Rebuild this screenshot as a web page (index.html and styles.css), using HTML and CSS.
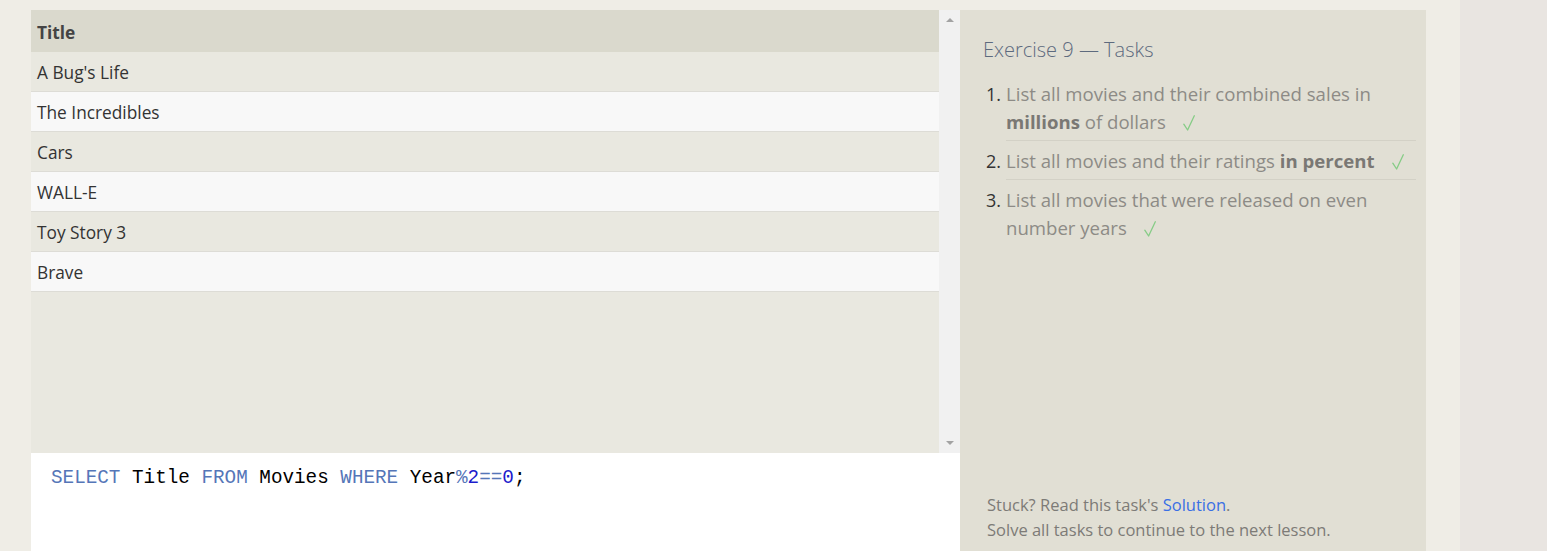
FILE: index.html
```html
<!DOCTYPE html>
<html>
<head>
<meta charset="utf-8">
<link rel="stylesheet" href="styles.css">
</head>
<body>
<div class="page">
  <div class="app">
    <div class="left">
      <div class="results">
        <div class="table">
          <div class="row head">Title</div>
          <div class="row odd">A Bug's Life</div>
          <div class="row even">The Incredibles</div>
          <div class="row odd">Cars</div>
          <div class="row even">WALL-E</div>
          <div class="row odd">Toy Story 3</div>
          <div class="row even">Brave</div>
        </div>
        <div class="scrollbar">
          <span class="arrow up"></span>
          <span class="arrow down"></span>
        </div>
      </div>
      <div class="editor"><span class="kw">SELECT</span> Title <span class="kw">FROM</span> Movies <span class="kw">WHERE</span> Year<span class="op">%</span><span class="num">2</span><span class="op">==</span><span class="num">0</span>;</div>
    </div>
    <div class="tasks">
      <h2 class="heading">Exercise 9 — Tasks</h2>
      <ol class="list">
        <li class="item"><span class="n">1.</span><div class="txt">List all movies and their combined sales in <b>millions</b> of dollars<svg class="check" viewBox="0 0 12 16"><path d="M0.8 9.2 L4.6 15 L11.3 0.8"/></svg></div></li>
        <li class="item"><span class="n">2.</span><div class="txt">List all movies and their ratings <b>in percent</b><svg class="check" viewBox="0 0 12 16"><path d="M0.8 9.2 L4.6 15 L11.3 0.8"/></svg></div></li>
        <li class="item last"><span class="n">3.</span><div class="txt">List all movies that were released on even number years<svg class="check" viewBox="0 0 12 16"><path d="M0.8 9.2 L4.6 15 L11.3 0.8"/></svg></div></li>
      </ol>
      <div class="footer">
        <div>Stuck? Read this task's <a class="link">Solution</a>.</div>
        <div>Solve all tasks to continue to the next lesson.</div>
      </div>
    </div>
  </div>
</div>
<div class="strip"></div>
</body>
</html>
```
FILE: styles.css
```css
html, body {
  margin: 0;
  height: 100%;
}
body {
  display: flex;
  background: #efede6;
  font-family: "Open Sans", "Noto Sans", sans-serif;
  overflow: hidden;
}
.page {
  width: 1460px;
  flex: none;
  padding: 10px 0 0 31px;
  box-sizing: border-box;
}
.strip {
  flex: 1;
  background: #e9e5e1;
}
.app {
  display: flex;
  height: 541px;
}
.left {
  width: 929px;
  display: flex;
  flex-direction: column;
}
.results {
  height: 443px;
  display: flex;
  background: #e9e8e0;
}
.table {
  flex: 1;
}
.row {
  height: 40px;
  box-sizing: border-box;
  border-bottom: 1px solid #dddcd6;
  padding-left: 6px;
  font-size: 17.3px;
  line-height: 42px;
  color: #333;
  overflow: hidden;
}
.row.head {
  height: 42px;
  line-height: 46px;
  background: #dad9cd;
  font-weight: 700;
  color: #444;
  border-bottom: none;
}
.row.odd { background: #e9e8e0; }
.row.even { background: #f8f8f8; }
.scrollbar {
  width: 21px;
  background: #f1f1f1;
  display: flex;
  flex-direction: column;
  justify-content: space-between;
  align-items: center;
  padding: 8px 0 8px;
  box-sizing: border-box;
}
.arrow {
  width: 0;
  height: 0;
  border-left: 4px solid transparent;
  border-right: 4px solid transparent;
}
.arrow.up { border-bottom: 4px solid #a3a3a3; }
.arrow.down { border-top: 4px solid #a3a3a3; }
.editor {
  flex: 1;
  background: #fff;
  padding: 13px 0 0 20px;
  font-family: "Liberation Mono", "DejaVu Sans Mono", monospace;
  font-size: 19.3px;
  line-height: 24px;
  color: #000;
}
.kw, .op { color: #5576b8; }
.num { color: #1c1ccc; }
.tasks {
  width: 466px;
  background: #e1dfd4;
  display: flex;
  flex-direction: column;
  box-sizing: border-box;
  padding: 26px 10px 9px 0;
}
.heading {
  margin: 0 0 10px 23px;
  font-size: 20px;
  font-weight: 300;
  line-height: 28px;
  color: #5d6a7e;
}
.list {
  list-style: none;
  margin: 0;
  padding: 0 0 0 26px;
}
.item {
  display: grid;
  grid-template-columns: 20px 1fr;
  font-size: 18.6px;
  line-height: 28px;
}
.n {
  color: #333;
  padding-top: 6px;
  font-size: 18px;
}
.txt {
  color: #8d8b86;
  padding: 6px 0 4px;
  border-bottom: 1px solid #d3d1c6;
}
.item.last .txt { border-bottom: none; }
.txt b { color: #7a7874; font-weight: 700; }
.check {
  display: inline-block;
  width: 12px;
  height: 16px;
  margin-left: 17px;
  vertical-align: -2px;
  fill: none;
  stroke: #86cc86;
  stroke-width: 1.3;
  stroke-linecap: round;
  stroke-linejoin: round;
}
.footer {
  margin-top: auto;
  padding-left: 27px;
  font-size: 16.5px;
  line-height: 25px;
  color: #7d7b77;
}
.link {
  color: #3a6fe4;
}
```
